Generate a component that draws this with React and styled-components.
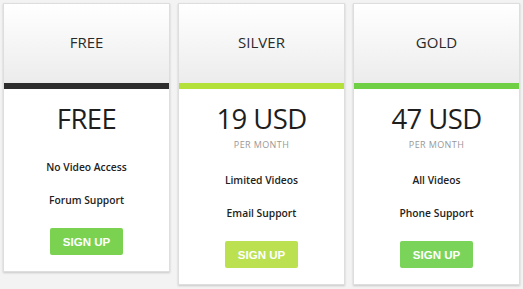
import React from "react";
import styled, { createGlobalStyle } from "styled-components";

const Global = createGlobalStyle`
  html, body { margin: 0; padding: 0; background: #f3f3f3; }
  body { font-family: "Open Sans", "DejaVu Sans", sans-serif; }
`;

const Page = styled.div`
  display: flex;
  align-items: flex-start;
  gap: 8px;
  padding: 3px 0 0 3px;
  width: 523px;
  height: 289px;
  box-sizing: border-box;
`;

const Card = styled.div`
  width: 167px;
  background: #fff;
  border: 1px solid #dedede;
  box-sizing: border-box;
  box-shadow: 0 1px 2px rgba(0, 0, 0, 0.18);
  display: flex;
  flex-direction: column;
  align-items: center;
  padding-bottom: 16px;
`;

const Header = styled.div`
  align-self: stretch;
  height: 79px;
  box-sizing: border-box;
  padding-bottom: 3px;
  background: linear-gradient(#ffffff, #ececec);
  display: flex;
  align-items: center;
  justify-content: center;
  font-size: 15px;
  color: #2a2a2a;
`;

const Bar = styled.div`
  align-self: stretch;
  height: 6px;
  background: ${(p) => p.$color};
`;

const Price = styled.div`
  margin-top: 11px;
  font-size: 27.5px;
  line-height: 38px;
  letter-spacing: -0.6px;
  color: #1e1e1e;
`;

const Period = styled.div`
  margin-top: 2px;
  font-size: 9px;
  line-height: 10px;
  color: #999;
  letter-spacing: 0.4px;
`;

const Features = styled.div`
  margin-top: ${(p) => (p.$compact ? "13px" : "14px")};
  display: flex;
  flex-direction: column;
  align-items: center;
`;

const Feature = styled.div`
  font-size: 10.3px;
  font-weight: 600;
  line-height: 33px;
  color: #222;
`;

const Button = styled.button`
  margin-top: 11px;
  width: 73px;
  height: 27px;
  border: none;
  border-radius: 2px;
  background: ${(p) => p.$color};
  color: #fff;
  font-family: "Liberation Sans", Arial, sans-serif;
  font-weight: bold;
  font-size: 11.5px;
  padding: 0;
  cursor: pointer;
`;

const plans = [
  { name: "FREE", price: "FREE", bar: "#2d2d2d", btn: "#7bd250", features: ["No Video Access", "Forum Support"] },
  { name: "SILVER", price: "19 USD", period: "PER MONTH", bar: "#b4e03a", btn: "#bbe150", features: ["Limited Videos", "Email Support"] },
  { name: "GOLD", price: "47 USD", period: "PER MONTH", bar: "#6fd046", btn: "#7bd45a", features: ["All Videos", "Phone Support"] },
];

export default function App() {
  return (
    <>
      <Global />
      <Page>
        {plans.map((p) => (
          <Card key={p.name}>
            <Header>{p.name}</Header>
            <Bar $color={p.bar} />
            <Price>{p.price}</Price>
            {p.period && <Period>{p.period}</Period>}
            <Features $compact={!p.period}>
              {p.features.map((f) => (
                <Feature key={f}>{f}</Feature>
              ))}
            </Features>
            <Button $color={p.btn}>SIGN UP</Button>
          </Card>
        ))}
      </Page>
    </>
  );
}
